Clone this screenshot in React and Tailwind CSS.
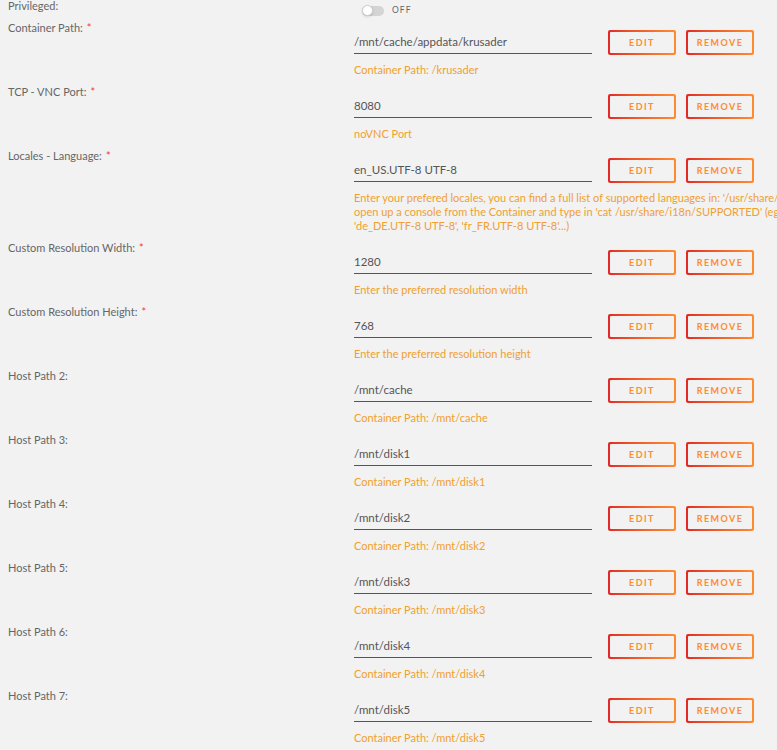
import React from "react";

const font = { fontFamily: "Lato, 'Open Sans', sans-serif" };

function GradientButton({ children }) {
  return (
    <div className="rounded-[2px] bg-gradient-to-r from-[#e22828] to-[#ff8c2f] p-[2px]">
      <div className="flex h-[21px] w-[64px] items-center justify-center rounded-[1px] bg-[#f2f2f2] text-[9px] font-bold tracking-[0.16em] text-[#ff8c2f]">
        {children}
      </div>
    </div>
  );
}

function Field({ label, required = true, value, desc }) {
  const lines = Array.isArray(desc) ? desc : [desc];
  return (
    <div className="flex">
      <div className="w-[354px] shrink-0 pl-2 text-[11px] leading-[14px] text-[#666]">
        {label}:{required && <span className="ml-1 text-[#f33]">*</span>}
      </div>
      <div className="mt-[9px] pb-[8px]">
        <div className="flex items-start">
          <div className="h-[24px] w-[238px] border-b border-[#555] pt-[5px] text-[11.5px] leading-[14px] text-[#555]">
            {value}
          </div>
          <div className="ml-4 flex gap-[10px]">
            <GradientButton>EDIT</GradientButton>
            <GradientButton>REMOVE</GradientButton>
          </div>
        </div>
        <div className="mt-[8px] text-[11px] leading-[14px] text-[#f0a030]">
          {lines.map((l, i) => (
            <div key={i} className="whitespace-nowrap">
              {l}
            </div>
          ))}
        </div>
      </div>
    </div>
  );
}

const fields = [
  { label: "Container Path", value: "/mnt/cache/appdata/krusader", desc: "Container Path: /krusader" },
  { label: "TCP - VNC Port", value: "8080", desc: "noVNC Port" },
  {
    label: "Locales - Language",
    value: "en_US.UTF-8 UTF-8",
    desc: [
      "Enter your prefered locales, you can find a full list of supported languages in: '/usr/share/i18n/SUPPORTED' simply",
      "open up a console from the Container and type in 'cat /usr/share/i18n/SUPPORTED' (eg: 'en_US.UTF-8 UTF-8',",
      "'de_DE.UTF-8 UTF-8', 'fr_FR.UTF-8 UTF-8'...)",
    ],
  },
  { label: "Custom Resolution Width", value: "1280", desc: "Enter the preferred resolution width" },
  { label: "Custom Resolution Height", value: "768", desc: "Enter the preferred resolution height" },
  { label: "Host Path 2", required: false, value: "/mnt/cache", desc: "Container Path: /mnt/cache" },
  { label: "Host Path 3", required: false, value: "/mnt/disk1", desc: "Container Path: /mnt/disk1" },
  { label: "Host Path 4", required: false, value: "/mnt/disk2", desc: "Container Path: /mnt/disk2" },
  { label: "Host Path 5", required: false, value: "/mnt/disk3", desc: "Container Path: /mnt/disk3" },
  { label: "Host Path 6", required: false, value: "/mnt/disk4", desc: "Container Path: /mnt/disk4" },
  { label: "Host Path 7", required: false, value: "/mnt/disk5", desc: "Container Path: /mnt/disk5" },
];

export default function App() {
  return (
    <div className="h-[750px] w-[777px] overflow-hidden bg-[#f2f2f2]" style={font}>
      <div className="-mt-px flex h-[22px]">
        <div className="w-[354px] shrink-0 pl-2 text-[11px] leading-[14px] text-[#666]">Privileged:</div>
        <div className="mt-px flex items-center">
          <div className="ml-2 flex h-[10px] w-[22px] items-center rounded-full bg-[#d4d4d4]">
            <div className="h-[11px] w-[11px] rounded-full border border-[#ccc] bg-white shadow-sm" />
          </div>
          <span className="ml-[8px] text-[8.5px] tracking-[0.12em] text-[#666]">OFF</span>
        </div>
      </div>
      {fields.map((f) => (
        <Field key={f.label} {...f} />
      ))}
    </div>
  );
}
